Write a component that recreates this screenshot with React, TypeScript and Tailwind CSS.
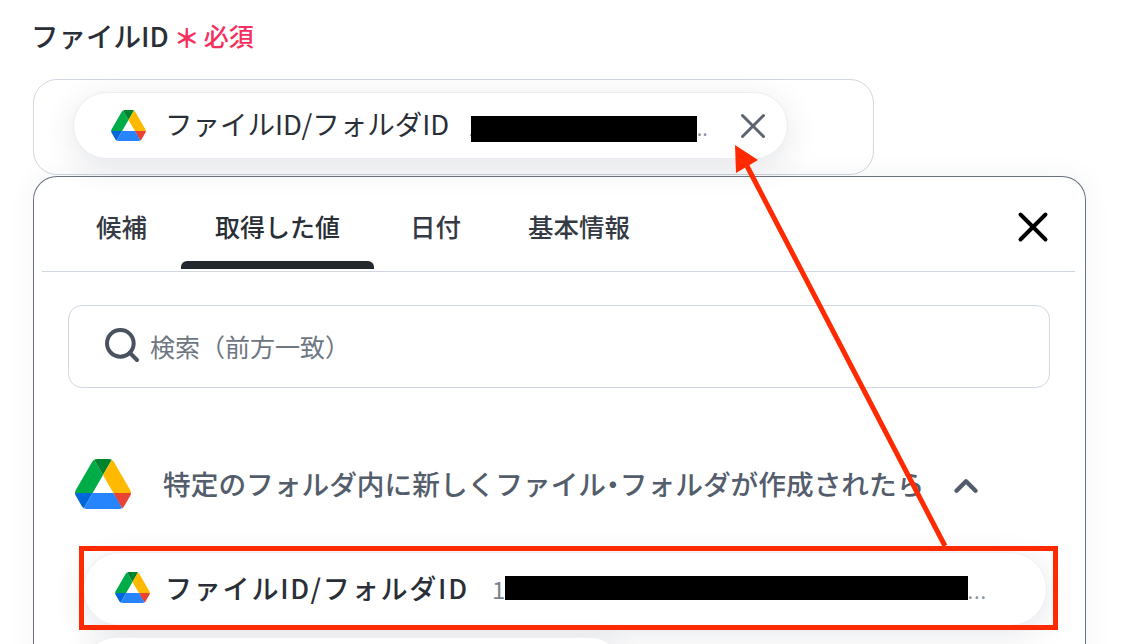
import { X, Search, ChevronUp } from "lucide-react";

function DriveIcon({ className }: { className: string }) {
  return (
    <svg viewBox="0 0 87.3 78" className={className}>
      <path d="m6.6 66.85 3.85 6.65c.8 1.4 1.95 2.5 3.3 3.3l13.75-23.8h-27.5c0 1.55.4 3.1 1.2 4.5z" fill="#0066da" />
      <path d="m43.65 25-13.75-23.8c-1.35.8-2.5 1.9-3.3 3.3l-25.4 44a9.06 9.06 0 0 0 -1.2 4.5h27.5z" fill="#00ac47" />
      <path d="m73.55 76.8c1.35-.8 2.5-1.9 3.3-3.3l1.6-2.75 7.65-13.25c.8-1.4 1.2-2.95 1.2-4.5h-27.502l5.852 11.5z" fill="#ea4335" />
      <path d="m43.65 25 13.75-23.8c-1.35-.8-2.9-1.2-4.5-1.2h-18.5c-1.6 0-3.15.45-4.5 1.2z" fill="#00832d" />
      <path d="m59.8 53h-32.3l-13.75 23.8c1.35.8 2.9 1.2 4.5 1.2h50.8c1.6 0 3.15-.45 4.5-1.2z" fill="#2684fc" />
      <path d="m73.4 26.5-12.7-22c-.8-1.4-1.95-2.5-3.3-3.3l-13.75 23.8 16.15 28h27.45c0-1.55-.4-3.1-1.2-4.5z" fill="#ffba00" />
    </svg>
  );
}

const TABS = [
  { label: "候補", active: false, w: "w-[85px]" },
  { label: "取得した値", active: true, w: "w-[229px]" },
  { label: "日付", active: false, w: "w-[118px]" },
  { label: "基本情報", active: false, w: "w-[106px]" },
];

export default function App() {
  return (
    <div className="relative h-[644px] w-[1146px] overflow-hidden bg-white pl-[33px] font-['Noto_Sans_CJK_JP',sans-serif] text-[#2a2f37]">
      {/* ラベル */}
      <div className="flex h-[79px] items-start pt-[14px]">
        <span className="-ml-[2px] text-[27.5px] font-medium leading-[42px]">ファイルID</span>
        <span className="ml-[5px] pt-[3px] text-[26px] font-bold leading-[40px] text-[#f5305f]">＊</span>
        <span className="ml-[4px] text-[25px] font-medium leading-[42px] text-[#f5305f]">必須</span>
      </div>

      {/* 入力欄 */}
      <div className="flex h-[96px] w-[841px] items-start rounded-[24px] border border-[#d0d7e2] pl-[39px] pt-[12px]">
        <div className="flex h-[67px] w-[715px] items-center rounded-[34px] border border-[#eaedf2] bg-white pl-[37px] shadow-[0_8px_32px_rgba(40,50,70,0.12)]">
          <DriveIcon className="h-[31px] w-[35px] shrink-0" />
          <span className="mb-[4px] ml-[19px] whitespace-nowrap text-[27.5px] leading-none">ファイルID/フォルダID</span>
          <span className="ml-[19px] w-[3px] text-[22px] leading-none text-[#7b8390]">1</span>
          <div className="relative mt-[6px] h-[26px] w-[226px] bg-black" />
          <span className="self-end pb-[21px] text-[14px] font-bold leading-none tracking-[1px] text-[#8a919c]">..</span>
          <X className="ml-[24px] h-[42px] w-[42px] shrink-0 text-[#5b6470]" strokeWidth={1.7} />
        </div>
      </div>

      {/* ポップアップ */}
      <div className="mt-[1px] h-[520px] w-[1053px] rounded-t-[24px] border border-b-0 border-[#6b7280] bg-white shadow-[0_0_28px_rgba(40,50,70,0.06)]">
        <div className="relative mx-[8px] flex h-[95px] w-[1033px] border-b border-[#d0d7e2] pl-[54px]">
          {TABS.map((tab) => (
            <div key={tab.label} className={`${tab.w} flex-none`}>
              {tab.active ? (
                <div className="relative h-full w-[193px] text-center">
                  <span className="block pt-[28px] text-[25px] font-medium leading-[42px]">{tab.label}</span>
                  <div className="absolute bottom-[2px] left-0 h-[8px] w-[193px] rounded-t-[6px] bg-[#23282f]" />
                </div>
              ) : (
                <span className="block whitespace-nowrap pt-[28px] text-[25.5px] font-medium leading-[42px] text-[#343a43]">{tab.label}</span>
              )}
            </div>
          ))}
          <X className="absolute right-[17px] top-[25px] h-[50px] w-[50px] text-black" strokeWidth={1.9} />
        </div>

        <div className="ml-[34px] mt-[33px] flex h-[83px] w-[982px] items-center rounded-[14px] border border-[#d0d7e2] pl-[33px]">
          <Search className="mb-[3px] h-[40px] w-[40px] shrink-0 text-[#49525e]" strokeWidth={2.4} />
          <span className="ml-[8px] text-[25px] leading-none text-[#6e7682]">検索（前方一致）</span>
        </div>

        <div className="ml-[41px] mt-[70px] flex h-[51px] items-center">
          <DriveIcon className="h-[50px] w-[56px] shrink-0" />
          <span className="ml-[32px] w-[762px] shrink-0 whitespace-nowrap text-[27.7px] font-medium leading-none text-[#535d6b]">
            特定のフォルダ内に新しくファイル<span className="[font-feature-settings:'palt']">・</span>フォルダが作成されたら
          </span>
          <ChevronUp className="ml-[22px] mt-[5px] h-[38px] w-[38px] shrink-0 text-[#535d6b]" strokeWidth={2.8} />
        </div>

        <div className="ml-[49px] mt-[43px] flex h-[74px] w-[964px] items-center rounded-[37px] border border-[#eef0f3] bg-white pl-[31px] shadow-[0_8px_32px_rgba(40,50,70,0.12)]">
          <DriveIcon className="mb-[4px] h-[31px] w-[35px] shrink-0" />
          <span className="mb-[4px] ml-[15px] whitespace-nowrap text-[27px] font-medium leading-none tracking-[1.8px]">ファイルID/フォルダID</span>
          <span className="ml-[23px] w-[13px] text-[24px] leading-none text-[#7b8390]">1</span>
          <div className="relative mb-[2px] h-[24px] w-[463px] bg-black" />
          <span className="self-end pb-[25px] text-[14px] font-bold leading-none tracking-[2px] text-[#8a919c]">...</span>
        </div>

        <div className="ml-[51px] mt-[11px] h-[60px] w-[536px] rounded-[30px] border border-[#eef0f3] bg-white shadow-[0_8px_32px_rgba(40,50,70,0.12)]" />
      </div>

      {/* 注釈 */}
      <div className="absolute left-[79px] top-[546px] h-[84px] w-[979px] border-[5px] border-[#ff2a00]" />
      <svg className="absolute left-0 top-0 h-[644px] w-[1146px]" viewBox="0 0 1146 644" fill="none">
        <path d="M945 546 L747 166" stroke="#ff2a00" strokeWidth="5" />
        <polygon points="735,145 736,173 758,160" fill="#ff2a00" />
      </svg>
    </div>
  );
}
